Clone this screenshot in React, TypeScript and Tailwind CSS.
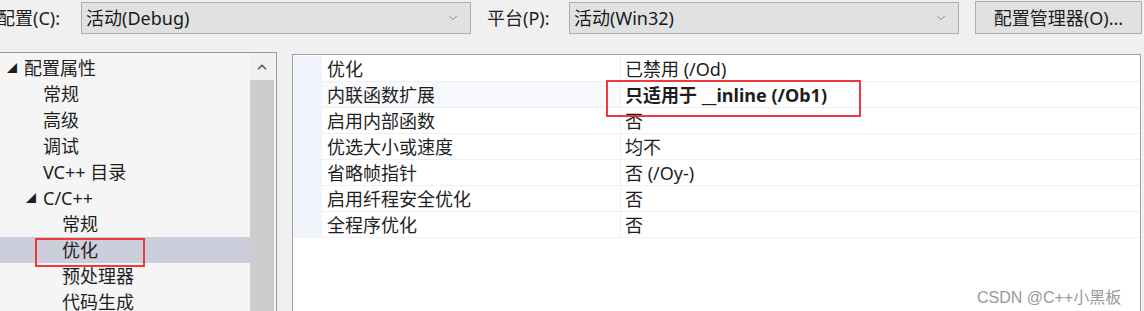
import { ChevronDown, ChevronUp } from 'lucide-react';

const font = { fontFamily: '"Noto Sans", "Noto Sans CJK SC", sans-serif' };

type TreeItem = { label: string; level: number; expanded?: boolean; selected?: boolean };

const tree: TreeItem[] = [
  { label: '配置属性', level: 0, expanded: true },
  { label: '常规', level: 1 },
  { label: '高级', level: 1 },
  { label: '调试', level: 1 },
  { label: 'VC++ 目录', level: 1 },
  { label: 'C/C++', level: 1, expanded: true },
  { label: '常规', level: 2 },
  { label: '优化', level: 2, selected: true },
  { label: '预处理器', level: 2 },
  { label: '代码生成', level: 2 },
];

const props: { name: string; value: string; bold?: boolean }[] = [
  { name: '优化', value: '已禁用 (/Od)' },
  { name: '内联函数扩展', value: '只适用于 __inline (/Ob1)', bold: true },
  { name: '启用内部函数', value: '否' },
  { name: '优选大小或速度', value: '均不' },
  { name: '省略帧指针', value: '否 (/Oy-)' },
  { name: '启用纤程安全优化', value: '否' },
  { name: '全程序优化', value: '否' },
];

function Combo({ text, width }: { text: string; width: string }) {
  return (
    <div className={`${width} h-[32px] bg-[#e1e1e1] border border-[#adadad] flex items-center pl-[4px] pr-[10px]`}>
      <span className="flex-1 text-[18px] leading-none text-[#1a1a1a]">{text}</span>
      <ChevronDown className="w-[14px] h-[14px] text-[#6d6d6d]" strokeWidth={1.2} />
    </div>
  );
}

export default function App() {
  return (
    <div className="w-[1144px] h-[311px] bg-[#f0f0f0] overflow-hidden relative text-[#1e1e1e]" style={font}>
      <div className="flex items-center h-[34px] pt-[1px]">
        <span className="text-[18px] leading-none ml-[-3px] w-[84px]">配置(C):</span>
        <Combo text="活动(Debug)" width="w-[390px]" />
        <span className="text-[18px] leading-none ml-[16px] w-[82px]">平台(P):</span>
        <Combo text="活动(Win32)" width="w-[390px]" />
        <div className="ml-[16px] w-[167px] h-[33px] bg-[#e1e1e1] border border-[#adadad] flex items-center justify-center text-[18px] leading-none">
          配置管理器(O)...
        </div>
      </div>

      <div className="flex mt-[18px] h-[300px]">
        <div className="w-[277px] border-t border-r border-[#999] bg-[#f5f5f5] flex">
          <div className="w-[250px] pt-[2px]">
            {tree.map((t, i) => (
              <div
                key={i}
                className={`h-[26px] flex items-center text-[18px] leading-none ${t.selected ? 'bg-[#cccedb]' : ''}`}
                style={{ paddingLeft: 7 + t.level * 19 }}
              >
                <span className="w-[17px] text-[10px] leading-none text-[#1e1e1e]">{t.expanded ? '◢' : ''}</span>
                <span>{t.label}</span>
              </div>
            ))}
          </div>
          <div className="w-[24px] flex flex-col">
            <div className="h-[27px] flex items-center justify-center bg-[#f0f0f0]">
              <ChevronUp className="w-[14px] h-[14px] text-[#606060]" strokeWidth={3} />
            </div>
            <div className="flex-1 bg-[#cdcdcd]" />
          </div>
        </div>

        <div className="ml-[15px] w-[849px] mt-[2px] border-t border-l border-r border-[#a0a0a0] bg-white">
          <div className="pt-[1px]">
            {props.map((p, i) => (
              <div key={i} className="flex h-[26px]">
                <div className="w-[29px] bg-[#f1f5fb]" />
                <div className={`w-[298px] flex items-center pl-[5px] text-[18px] leading-none border-b border-[#f0f0f0] ${i === 1 ? 'bg-[#f7f9fc]' : ''}`}>
                  {p.name}
                </div>
                <div className={`flex-1 flex items-center pl-[4px] text-[18px] leading-none border-b border-l border-[#f0f0f0] ${p.bold ? 'font-bold' : ''}`}>
                  {p.value}
                </div>
              </div>
            ))}
          </div>
        </div>
      </div>

      <div className="absolute left-[35px] top-[238px] w-[110px] h-[29px] border-2 border-[#ee3a3a]" />
      <div className="absolute left-[606px] top-[80px] w-[255px] h-[37px] border-2 border-[#ee3a3a]" />

      <div className="absolute left-[977px] top-[288px] text-[16px] leading-[20px] text-[#999]" style={{ fontFamily: '"Liberation Sans", "Noto Sans CJK SC", sans-serif' }}>
        CSDN @C++小黑板
      </div>
    </div>
  );
}
